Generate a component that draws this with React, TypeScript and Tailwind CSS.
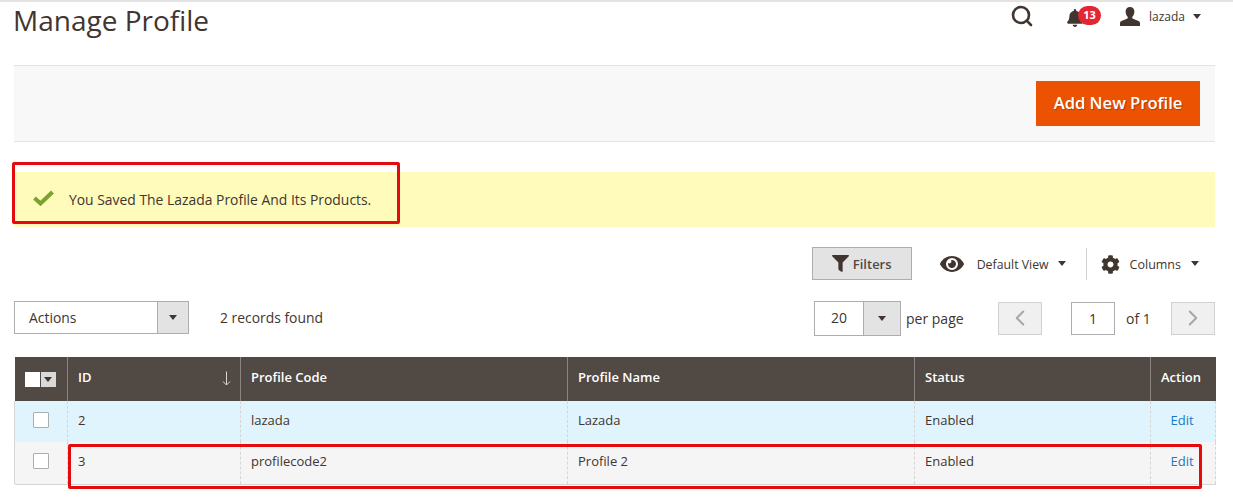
import { ChevronLeft, ChevronRight, Search } from 'lucide-react'
import { FaBell, FaCog, FaEye, FaFilter } from 'react-icons/fa'

function Caret({ className = '' }: { className?: string }) {
  return (
    <span
      className={`inline-block h-0 w-0 border-x-[4.5px] border-t-[5px] border-x-transparent border-t-[#41362f] ${className}`}
    />
  )
}

function UserIcon() {
  return (
    <svg width="20" height="19" viewBox="0 0 20 19" fill="#41362f">
      <path d="M10 0c2.7 0 4.4 1.9 4.4 4.6 0 2-.8 4-2 5.2-.3.4-.3 1.4.2 1.800 1.200.9 7.400 2 7.400 4.400V19H0v-3c0-2.400 6.200-3.500 7.400-4.400.5-.4.500-1.400.2-1.800-1.200-1.200-2-3.200-2-5.200C5.600 1.900 7.300 0 10 0z" />
    </svg>
  )
}

function SelectBox({ label, width }: { label: string; width: string }) {
  return (
    <div className={`flex h-[33px] ${width} self-start border border-[#adadad] bg-white`}>
      <span className="flex-1 pl-[14px] text-[13.9px] leading-[32px] text-[#41362f]">{label}</span>
      <span className="flex w-[31px] items-center justify-center border-l border-[#adadad] bg-[#e3e3e3]">
        <Caret />
      </span>
    </div>
  )
}

const rows = [
  { id: '2', code: 'lazada', name: 'Lazada', bg: 'bg-[#e0f4fe]', h: 'h-[41px]' },
  { id: '3', code: 'profilecode2', name: 'Profile 2', bg: 'bg-[#f5f5f5]', h: 'h-[42px]' },
]

const thClass = 'border-l border-[#8a837f] px-[10px] pb-[2px] text-left text-[13px] font-semibold text-white'
const tdClass = 'border-l border-dashed border-[#d6d6d6] px-[10px] pb-[2px] align-middle'

export default function App() {
  return (
    <div
      className="relative h-[501px] w-[1233px] overflow-hidden bg-white text-[#41362f]"
      style={{ fontFamily: '"Open Sans", sans-serif' }}
    >
      <div className="h-[2px] bg-[#e3e3e3]" />

      <div className="flex h-[63px] items-start justify-between pl-[14px] pr-[32px]">
        <h1 className="-ml-[1px] text-[28px] leading-[36px] font-normal">Manage Profile</h1>
        <div className="flex items-center pt-[2px]">
          <Search size={24} strokeWidth={2.6} className="mr-[31px] text-[#41362f]" />
          <div className="relative mr-[33px] h-[24px] w-[22px]">
            <FaBell size={18} className="absolute left-[1px] top-[5px] text-[#41362f]" />
            <span className="absolute left-[13px] top-[2px] flex h-[19px] w-[23px] items-center justify-center rounded-full bg-[#e22633] text-[11px] font-bold text-white">
              13
            </span>
          </div>
          <UserIcon />
          <span className="ml-[9px] mr-[8px] mt-[2px] text-[12px] text-[#41362f]">lazada</span>
          <Caret />
        </div>
      </div>

      <div className="ml-[14px] mr-[18px] flex h-[77px] items-center justify-end border-y border-[#e3e3e3] bg-[#f8f8f8] pr-[15px]">
        <button className="h-[45px] w-[164px] bg-[#eb5202] text-[16.6px] font-semibold text-white [text-shadow:1px_1px_1px_rgba(0,0,0,0.25)]">
          Add New Profile
        </button>
      </div>

      <div className="ml-[14px] mr-[18px] mt-[30px] flex h-[55px] items-center bg-[#fffbbb] pl-[19px]">
        <svg width="21" height="16" viewBox="0 0 21 16" className="mr-[15px] -mt-[3px]">
          <path d="M1.500 8 L7.500 13.500 L19.500 2" fill="none" stroke="#79a22e" strokeWidth="4" />
        </svg>
        <span className="mt-[2px] text-[13.9px] text-[#41362f]">You Saved The Lazada Profile And Its Products.</span>
      </div>

      <div className="mr-[34px] mt-[20px] flex h-[33px] items-center justify-end">
        <button className="mr-[28px] flex h-[33px] w-[100px] items-center justify-center border border-[#adadad] bg-[#e3e3e3] text-[13px] font-semibold text-[#514943]">
          <FaFilter size={17} className="mr-[4px] text-[#41362f]" />
          <span className="mt-[3px]">Filters</span>
        </button>
        <FaEye size={24} className="mr-[13px] text-[#41362f]" />
        <span className="mr-[9px] mt-[4px] text-[12.3px]">Default View</span>
        <Caret className="mr-[20px]" />
        <span className="mr-[14px] h-[32px] w-px bg-[#d1d1d1]" />
        <FaCog size={19} className="mr-[10px] mt-[1px] text-[#41362f]" />
        <span className="mr-[10px] mt-[4px] text-[12.5px]">Columns</span>
        <Caret />
      </div>

      <div className="mr-[18px] mt-[21px] flex h-[35px] items-center pl-[14px]">
        <SelectBox label="Actions" width="w-[175px]" />
        <span className="ml-[31px] text-[13.9px]">2 records found</span>
        <div className="ml-auto flex items-center">
          <div className="flex h-[35px] w-[87px] border border-[#adadad] bg-white">
            <span className="w-[48px] text-center text-[14px] leading-[32px]">20</span>
            <span className="flex flex-1 items-center justify-center border-l border-[#adadad] bg-[#e3e3e3]">
              <Caret />
            </span>
          </div>
          <span className="ml-[5px] -mt-[1px] w-[92px] text-[14px]">per page</span>
          <span className="flex h-[33px] w-[44px] items-center justify-center border border-[#d1d1d1] bg-[#f0f0f0]">
            <ChevronLeft size={26} strokeWidth={1.800} className="-mt-[1px] text-[#a8a5a2]" />
          </span>
          <span className="ml-[29px] flex h-[33px] w-[44px] items-center justify-center border border-[#adadad] bg-white pb-[1px] text-[14px]">
            1
          </span>
          <span className="ml-[11px] -mt-[1px] w-[45px] text-[14px]">of 1</span>
          <span className="flex h-[33px] w-[44px] items-center justify-center border border-[#d1d1d1] bg-[#f0f0f0]">
            <ChevronRight size={26} strokeWidth={1.800} className="-mt-[1px] text-[#a8a5a2]" />
          </span>
        </div>
      </div>

      <table className="ml-[14px] mt-[21px] w-[1201px] table-fixed border-collapse text-[13px] text-[#41362f]">
        <colgroup>
          <col className="w-[53px]" />
          <col className="w-[173px]" />
          <col className="w-[327px]" />
          <col className="w-[347px]" />
          <col className="w-[236px]" />
          <col className="w-[65px]" />
        </colgroup>
        <thead>
          <tr className="h-[44px] bg-[#514943]">
            <th className="px-0">
              <span className="ml-[10px] flex h-[15px] w-[31px]">
                <span className="w-[15px] bg-white" />
                <span className="ml-[1px] flex flex-1 items-center justify-center bg-[#d9d9d9]">
                  <Caret />
                </span>
              </span>
            </th>
            <th className={thClass}>
              <span className="flex items-center justify-between">
                ID
                <svg width="9" height="15" viewBox="0 0 9 15" fill="none" stroke="#d8d5d2" strokeWidth="1" className="-mr-[1px]">
                  <path d="M4.500 0.500V14M1 10.500L4.500 14L8 10.500" />
                </svg>
              </span>
            </th>
            <th className={thClass}>Profile Code</th>
            <th className={thClass}>Profile Name</th>
            <th className={thClass}>Status</th>
            <th className={thClass}>Action</th>
          </tr>
        </thead>
        <tbody>
          {rows.map((row) => (
            <tr key={row.id} className={`${row.h} ${row.bg}`}>
              <td className="border-l border-[#d6d6d6] text-center align-middle">
                <span className="inline-block h-[16px] w-[16px] translate-y-[1px] rounded-[1px] border border-[#adadad] bg-white" />
              </td>
              <td className={tdClass}>{row.id}</td>
              <td className={tdClass}>{row.code}</td>
              <td className={tdClass}>{row.name}</td>
              <td className={tdClass}>Enabled</td>
              <td className={`${tdClass} border-r border-r-solid border-r-[#d6d6d6] pr-[12px] text-center`}>
                <span className="text-[#1979c3]">Edit</span>
              </td>
            </tr>
          ))}
          <tr className="h-px bg-[#d6d6d6]">
            <td colSpan={6} className="h-px p-0" />
          </tr>
        </tbody>
      </table>

      {/* red annotation boxes drawn over the screenshot */}
      <div className="absolute left-[12px] top-[162px] h-[62px] w-[388px] rounded-[2px] border-[3px] border-[#e30b0b]" />
      <div className="absolute left-[68px] top-[444px] h-[45px] w-[1134px] rounded-[2px] border-[3px] border-[#e30b0b]" />
    </div>
  )
}
